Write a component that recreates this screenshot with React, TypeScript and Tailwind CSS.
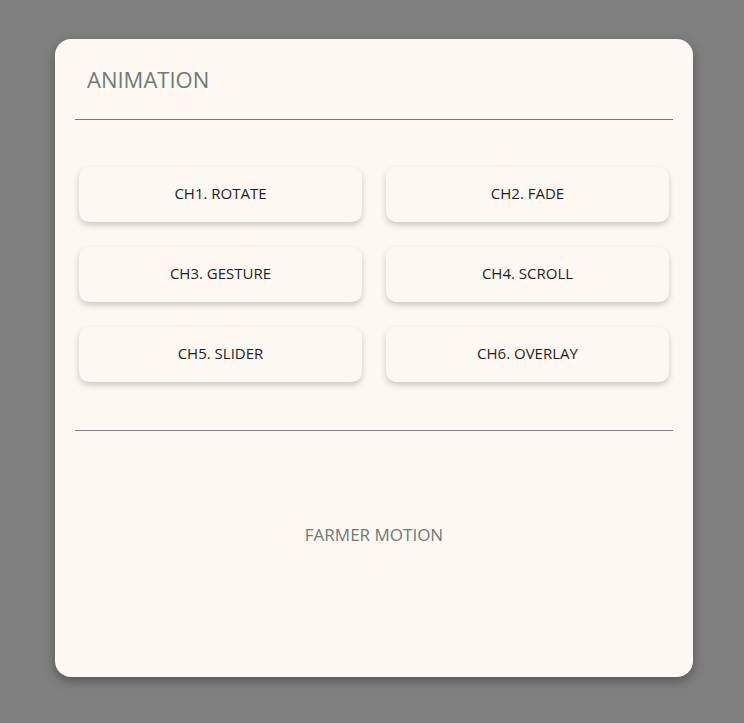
import React from "react";

const items = [
  "CH1. ROTATE",
  "CH2. FADE",
  "CH3. GESTURE",
  "CH4. SCROLL",
  "CH5. SLIDER",
  "CH6. OVERLAY",
];

export default function App() {
  return (
    <div
      className="min-h-[723px] w-full bg-[#808080] flex pl-[55px] pt-[39px]"
      style={{ fontFamily: '"Open Sans", "Noto Sans", sans-serif' }}
    >
      <div className="w-[638px] h-[638px] bg-[#fdf8f2] rounded-[16px] shadow-[0_4px_12px_rgba(0,0,0,0.35)] px-[20px] flex flex-col">
        <div className="h-[80px] flex items-center pl-[12px]">
          <h1 className="text-[22px] text-[#6e7b75] leading-none tracking-normal">ANIMATION</h1>
        </div>
        <div className="h-px bg-[#6e7b75]" />
        <div className="grid grid-cols-2 gap-x-[24px] gap-y-[25px] px-[4px] pt-[47px] pb-[48px]">
          {items.map((t) => (
            <button
              key={t}
              className="h-[55px] rounded-[10px] bg-[#fdf8f2] shadow-[0_3px_6px_rgba(0,0,0,0.2)] text-[15px] leading-none pb-[2px] text-[#1e1e1e] flex items-center justify-center"
            >
              {t}
            </button>
          ))}
        </div>
        <div className="h-px bg-[#808080]" />
        <div className="flex justify-center pt-[95px]">
          <span className="text-[17px] text-[#6e7b75] leading-none">FARMER MOTION</span>
        </div>
      </div>
    </div>
  );
}
